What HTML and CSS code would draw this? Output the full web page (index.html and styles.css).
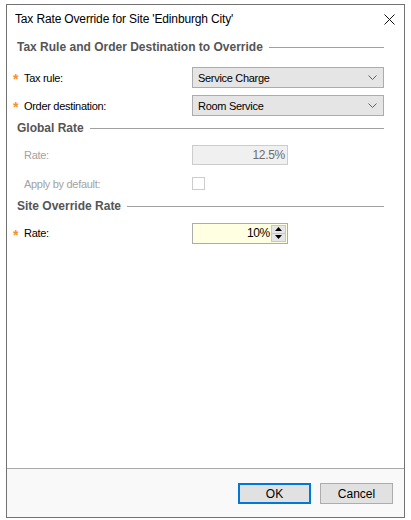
FILE: index.html
```html
<!DOCTYPE html>
<html lang="en">
<head>
    <meta charset="UTF-8">
    <title>Tax Rate Override</title>
    <link rel="stylesheet" href="styles.css">
</head>
<body>
    <div class="dialog">
        <div class="titlebar">
            <span class="title">Tax Rate Override for Site 'Edinburgh City'</span>
            <svg class="close" width="11" height="11" viewBox="0 0 11 11">
                <path d="M0.5 0.5L10.5 10.5M10.5 0.5L0.5 10.5" stroke="#111" stroke-width="1" fill="none"/>
            </svg>
        </div>
        <div class="body">
            <div class="group group-first">
                <span class="group-title">Tax Rule and Order Destination to Override</span>
                <span class="group-line"></span>
            </div>
            <div class="row row-select">
                <span class="req">*</span>
                <span class="label">Tax rule:</span>
                <div class="select">
                    <span>Service Charge</span>
                    <svg width="9" height="5" viewBox="0 0 9 5"><path d="M0.5 0.5L4.5 4.5L8.5 0.5" stroke="#606060" fill="none"/></svg>
                </div>
            </div>
            <div class="row row-select row-last">
                <span class="req">*</span>
                <span class="label">Order destination:</span>
                <div class="select">
                    <span>Room Service</span>
                    <svg width="9" height="5" viewBox="0 0 9 5"><path d="M0.5 0.5L4.5 4.5L8.5 0.5" stroke="#606060" fill="none"/></svg>
                </div>
            </div>

            <div class="group">
                <span class="group-title">Global Rate</span>
                <span class="group-line"></span>
            </div>
            <div class="row row-rate">
                <span class="req"></span>
                <span class="label disabled">Rate:</span>
                <div class="number number-disabled">12.5%</div>
            </div>
            <div class="row row-check">
                <span class="req"></span>
                <span class="label disabled">Apply by default:</span>
                <span class="checkbox"></span>
            </div>

            <div class="group">
                <span class="group-title">Site Override Rate</span>
                <span class="group-line"></span>
            </div>
            <div class="row row-rate">
                <span class="req">*</span>
                <span class="label">Rate:</span>
                <div class="number number-edit">
                    <span class="value">10%</span>
                    <div class="spin">
                        <span class="spin-btn"><svg width="7" height="4" viewBox="0 0 7 4"><path d="M3.5 0L7 4H0Z" fill="#000"/></svg></span>
                        <span class="spin-btn"><svg width="7" height="4" viewBox="0 0 7 4"><path d="M0 0H7L3.5 4Z" fill="#000"/></svg></span>
                    </div>
                </div>
            </div>
        </div>
        <div class="footer">
            <button class="btn btn-default">OK</button>
            <button class="btn">Cancel</button>
        </div>
    </div>
</body>
</html>
```

FILE: styles.css
```css
*{
    margin:0;
    padding:0;
    box-sizing:border-box;
}
body{
    background:#fff;
    padding:4px 0 0 6px;
    font-family:"Liberation Sans", Arial, sans-serif;
    font-size:11px;
    color:#000;
}
.dialog{
    width:399px;
    height:514px;
    border:1px solid #727272;
    background:#fff;
    display:flex;
    flex-direction:column;
}
.titlebar{
    height:29px;
    display:flex;
    align-items:center;
    justify-content:space-between;
    padding:0 9px 1px 8px;
}
.title{
    font-size:12px;
    letter-spacing:-0.15px;
    color:#000;
}
.close{
    margin-top:1px;
}
.body{
    flex:1;
    padding:4px 20px 0 5px;
}
/* section heading with a rule running to the right edge */
.group{
    display:flex;
    align-items:center;
    height:18px;
    padding-left:5px;
    margin-bottom:8px;
}
.group-first{
    margin-bottom:11px;
}
.group-title{
    font-weight:bold;
    font-size:12px;
    color:#555;
}
.group-line{
    flex:1;
    height:1px;
    background:#a0a0a0;
    margin-left:6px;
}
.row{
    display:flex;
    align-items:center;
}
.row-select{
    height:21px;
    margin-bottom:7px;
}
.row-last{
    margin-bottom:3px;
}
.row-rate{
    height:20px;
    margin-bottom:12px;
}
.row-check{
    height:13px;
    margin-bottom:7px;
}
.req{
    width:12px;
    color:#f5902a;
    font-weight:bold;
    font-size:14px;
    line-height:10px;
    padding-top:3px;
    padding-left:1px;
}
.label{
    width:168px;
    letter-spacing:-0.3px;
}
.label.disabled{
    color:#a2a2a2;
}
.select{
    flex:1;
    height:21px;
    border:1px solid #acacac;
    background:#e5e5e5;
    display:flex;
    align-items:center;
    justify-content:space-between;
    padding:0 6px 0 5px;
    letter-spacing:-0.3px;
}
.number{
    width:96px;
    height:20px;
    border:1px solid #acacac;
    display:flex;
    align-items:center;
    justify-content:flex-end;
    font-size:12px;
    letter-spacing:-0.3px;
}
.number-disabled{
    background:#f0f0f0;
    border-color:#cccccc;
    color:#6d6d6d;
    padding-right:2px;
}
.number-edit{
    background:#ffffe1;
    height:21px;
    padding-right:1px;
}
.value{
    margin-right:1px;
}
.spin{
    display:flex;
    flex-direction:column;
    width:15px;
    height:17px;
}
.spin-btn{
    flex:1;
    background:#e6e6e6;
    border:1px solid #c8c8c8;
    display:flex;
    align-items:center;
    justify-content:center;
}
.spin-btn + .spin-btn{
    border-top:none;
}
.checkbox{
    width:13px;
    height:13px;
    border:1px solid #cccccc;
    background:#fff;
}
.footer{
    height:49px;
    border-top:1px solid #a8a8a8;
    background:#f9f9f9;
    display:flex;
    justify-content:flex-end;
    align-items:flex-start;
    gap:9px;
    padding:14px 11px 0 0;
}
.btn{
    width:73px;
    height:21px;
    border:1px solid #adadad;
    background:#e1e1e1;
    font-family:"Liberation Sans", Arial, sans-serif;
    font-size:12px;
    color:#000;
}
.btn-default{
    border:2px solid #0078d7;
}
```
